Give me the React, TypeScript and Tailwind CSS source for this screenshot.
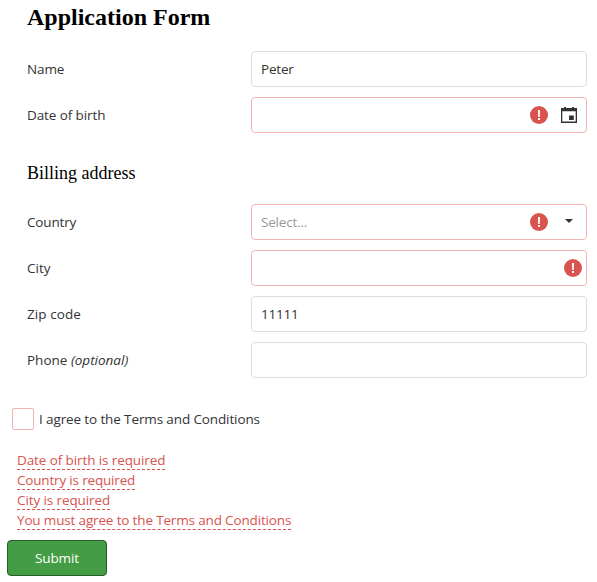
import type { ReactNode } from "react";

function ErrorIcon() {
  return (
    <svg width="18" height="18" viewBox="0 0 18 18" aria-hidden="true">
      <circle cx="9" cy="9" r="9" fill="#d9534f" />
      <path d="M8 4h2l-.2 7H8.2zM8 12h2v2H8z" fill="#fff" />
    </svg>
  );
}

function CalendarIcon() {
  return (
    <svg width="16" height="16" viewBox="0 0 16 16" fill="#333" aria-hidden="true">
      <path fillRule="evenodd" d="M0 1h3V0h2v1h6V0h2v1h3v15H0zM1.3 4.3v10.3h13.4V4.3z" />
      <path d="M8 8.5h4.8v4.5H8z" />
    </svg>
  );
}

function Field({
  label,
  value,
  invalid,
  children,
}: {
  label: ReactNode;
  value?: ReactNode;
  invalid?: boolean;
  children?: ReactNode;
}) {
  return (
    <div className="flex h-9 items-center">
      <div className="w-56 shrink-0 whitespace-nowrap">{label}</div>
      <div
        className={`flex h-9 w-[336px] items-center justify-between rounded-sm border pl-[9px] ${
          invalid ? "border-[#f2b4b2]" : "border-[#dddddd]"
        }`}
      >
        <span className="tracking-[-0.2px]">{value}</span>
        {children}
      </div>
    </div>
  );
}

const errors = [
  { text: "Date of birth is required", style: "tracking-[-0.1px]" },
  { text: "Country is required", style: "tracking-[-0.18px]" },
  { text: "City is required", style: "tracking-[-0.1px]" },
  { text: "You must agree to the Terms and Conditions", style: "tracking-[-0.157px]" },
];

export default function App() {
  return (
    <main className="flex h-[582px] w-[597px] flex-col items-start overflow-hidden bg-white font-['Open_Sans','Noto_Sans',sans-serif] text-[13.5px] leading-5 text-[#333]">
      <h1 className="mt-[3px] ml-[27px] font-['Liberation_Serif',serif] text-[24px] leading-7 font-bold text-black">
        Application Form
      </h1>
      <section className="mt-5 ml-[27px] flex flex-col gap-2.5">
        <Field label={<span className="tracking-[-0.1px]">Name</span>} value="Peter" />
        <Field label={<span className="tracking-[-0.1px]">Date of birth</span>} invalid>
          <div className="mr-[9px] flex items-center gap-[13px]">
            <ErrorIcon />
            <CalendarIcon />
          </div>
        </Field>
      </section>
      <h2 className="mt-[30px] ml-[27px] font-['Liberation_Serif',serif] text-[18px] leading-5 text-black">
        Billing address
      </h2>
      <section className="mt-[21px] ml-[27px] flex flex-col gap-2.5">
        <Field
          label={<span className="tracking-[-0.15px]">Country</span>}
          value={<span className="text-[#999]">Select...</span>}
          invalid
        >
          <div className="mr-[13px] flex items-center gap-[17px]">
            <ErrorIcon />
            <svg width="8" height="4" viewBox="0 0 8 4" className="-mt-0.5" aria-hidden="true">
              <path d="M0 0h8L4 4z" fill="#333" />
            </svg>
          </div>
        </Field>
        <Field label="City" invalid>
          <div className="mr-1">
            <ErrorIcon />
          </div>
        </Field>
        <Field label={<span className="tracking-[0.08px]">Zip code</span>} value="11111" />
        <Field label={<>Phone <em>(optional)</em></>} />
      </section>
      <label className="mt-[30px] ml-3 flex items-center gap-[5px]">
        <span className="h-[22px] w-[22px] rounded-[2px] border border-[#f2b4b2]" />
        <span className="tracking-[-0.12px]">I agree to the Terms and Conditions</span>
      </label>
      <ul className="mt-[21px] ml-[17px] flex flex-col items-start text-[#d9534f]">
        {errors.map((e) => (
          <li key={e.text} className={`mb-px h-[19px] border-b border-dashed border-[#d9534f] leading-[18px] ${e.style}`}>
            {e.text}
          </li>
        ))}
      </ul>
      <button className="mt-[9px] ml-[7px] h-9 w-[100px] rounded-sm border border-[#285c29] bg-[#449d44] tracking-[-0.15px] text-white">
        Submit
      </button>
    </main>
  );
}
